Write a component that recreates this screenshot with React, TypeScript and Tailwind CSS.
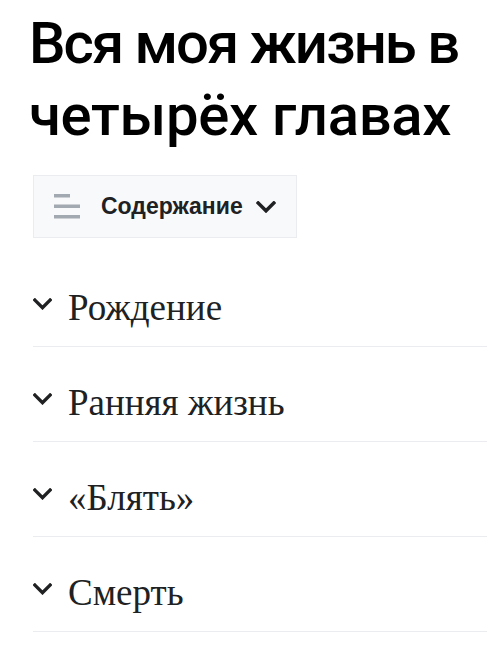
import React from "react";

const chapters = ["Рождение", "Ранняя жизнь", "«Блять»", "Смерть"];

function Chevron({ className }: { className?: string }) {
  return (
    <svg viewBox="0 0 18 11" className={className} fill="none">
      <path d="M1.8 1.8l7.2 7.2 7.2-7.2" stroke="currentColor" strokeWidth="3.2" strokeLinecap="square" />
    </svg>
  );
}

function TocIcon() {
  return (
    <svg viewBox="0 0 26 25" className="w-[26px] h-[25px]" fill="#a2a9b1">
      <rect x="0" y="0" width="16" height="3.5" />
      <rect x="0" y="10.5" width="26" height="3.5" />
      <rect x="0" y="21" width="26" height="3.5" />
    </svg>
  );
}

export default function App() {
  return (
    <div className="w-[487px] h-[669px] bg-white overflow-hidden pl-[33px]">
      {/* Page title */}
      <h1
        className="mt-[7px] -ml-[4px] text-[58px] leading-[72px] font-medium text-black whitespace-nowrap"
        style={{ fontFamily: "Roboto, 'Noto Sans', sans-serif" }}
      >
        <span className="block tracking-[-2px]">Вся моя жизнь в</span>
        <span className="block tracking-[-0.3px]">четырёх главах</span>
      </h1>

      {/* Table of contents toggle */}
      <button className="mt-[24px] flex items-center h-[63px] w-[264px] border border-[#eaecf0] bg-[#f8f9fa] pl-[20px]">
        <TocIcon />
        <span
          className="ml-[21px] text-[23px] font-bold text-[#202122]"
          style={{ fontFamily: "'Liberation Sans', Arial, sans-serif" }}
        >
          Содержание
        </span>
        <Chevron className="ml-[13px] w-[20px] h-[12px] text-[#202122]" />
      </button>

      {/* Collapsible sections */}
      <div className="mt-[14px]">
        {chapters.map((title) => (
          <div
            key={title}
            className="flex items-center h-[95px] pt-[17px] border-b border-[#eaecf0]"
          >
            <Chevron className="mb-[7px] w-[19px] h-[12px] text-[#202122]" />
            <span
              className="ml-[16px] text-[37px] text-[#202122]"
              style={{ fontFamily: "'Liberation Serif', 'Times New Roman', serif" }}
            >
              {title}
            </span>
          </div>
        ))}
      </div>
    </div>
  );
}
